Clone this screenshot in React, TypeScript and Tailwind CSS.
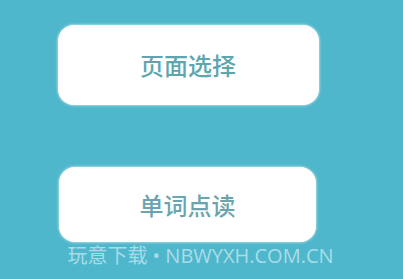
export default function App() {
  return (
    <div className="w-[403px] h-[279px] overflow-hidden bg-[#4fb7cb] flex flex-col items-center font-['Noto_Sans_CJK_SC',sans-serif]">
      <button
        type="button"
        className="mt-[25px] ml-[-27px] w-[261px] h-[80px] rounded-[16px] bg-white flex items-center justify-center text-[24px] font-medium text-[#5ea6ae] shadow-[0_0_3px_rgba(255,255,255,0.9)]"
      >
        页面选择
      </button>
      <button
        type="button"
        className="mt-[62px] ml-[-28px] w-[257px] h-[75px] rounded-[16px] bg-white flex items-center justify-center text-[24px] font-medium text-[#6aa5ad] shadow-[0_0_3px_rgba(255,255,255,0.9)]"
      >
        单词点读
      </button>
      <div className="mt-[2px] ml-[-2px] text-[20px] leading-[24px] text-[#a9dce8] whitespace-nowrap font-['Open_Sans','Noto_Sans_CJK_SC',sans-serif]">
        玩意下载 • NBWYXH.COM.CN
      </div>
    </div>
  );
}
